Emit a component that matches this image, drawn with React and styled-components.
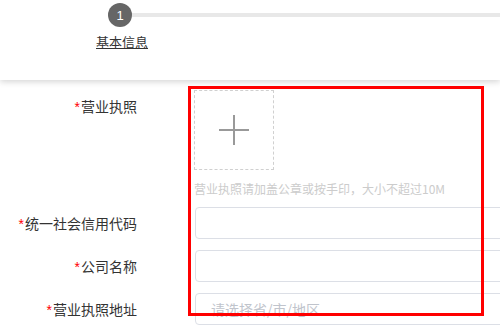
import React from 'react';
import styled, { createGlobalStyle } from 'styled-components';

const GlobalStyle = createGlobalStyle`
    html, body {
        margin: 0;
        padding: 0;
        background: #fff;
        width: 500px;
        height: 330px;
        overflow: hidden;
        font-family: "Noto Sans CJK SC", "Noto Sans", sans-serif;
    }
`;

const Page = styled.div`
    position: relative;
    width: 500px;
    height: 330px;
    overflow: hidden;
`;

const Header = styled.div`
    height: 80px;
    background: #fff;
    box-shadow: 0 2px 6px rgba(0, 0, 0, 0.16);
    padding: 3px 0 0 108px;
    box-sizing: border-box;
    position: relative;
    z-index: 1;
`;

const StepHead = styled.div`
    display: flex;
    align-items: center;
`;

const StepCircle = styled.div`
    width: 24px;
    height: 24px;
    border-radius: 50%;
    background: #666;
    color: #fff;
    font-family: "Liberation Sans", Arial, sans-serif;
    font-size: 13px;
    display: flex;
    align-items: center;
    justify-content: center;
    flex: none;
`;

const StepLine = styled.div`
    flex: 1;
    height: 4px;
    background: #e8e8e8;
`;

const StepTitle = styled.div`
    width: 28px;
    display: flex;
    justify-content: center;
    margin-top: 6px;
    white-space: nowrap;
    font-size: 13px;
    line-height: 18px;
    color: #333;
    text-decoration: underline;
`;

const Form = styled.div`
    padding-top: 10px;
`;

const Row = styled.div`
    display: flex;
    align-items: flex-start;
    margin-bottom: ${p => p.$gap || 10}px;
`;

const Label = styled.div`
    width: 137px;
    flex: none;
    text-align: right;
    font-size: 14px;
    line-height: 32px;
    color: #333;
`;

const Star = styled.span`
    color: #f00;
    font-family: "Liberation Sans", Arial, sans-serif;
    font-size: 14px;
    margin-right: 1px;
`;

const Content = styled.div`
    margin-left: ${p => p.$offset || 58}px;
    flex: none;
`;

const Upload = styled.div`
    width: 80px;
    height: 80px;
    box-sizing: border-box;
    border: 1px dashed #d0d0d0;
    display: flex;
    align-items: center;
    justify-content: center;
`;

const Hint = styled.div`
    margin-top: 9px;
    font-size: 12px;
    line-height: 20px;
    color: #ccc;
    white-space: nowrap;
`;

const Input = styled.div`
    width: 400px;
    height: 32px;
    box-sizing: border-box;
    border: 1px solid #dcdfe6;
    border-radius: 4px;
    padding-left: 15px;
    font-size: 14px;
    line-height: 30px;
    color: #c0c4cc;
`;

const Highlight = styled.div`
    position: absolute;
    left: 188px;
    top: 86px;
    width: 296px;
    height: 230px;
    box-sizing: border-box;
    border: 3px solid #f00;
    pointer-events: none;
    z-index: 2;
`;

const Plus = () => (
    <svg width="32" height="32" viewBox="0 0 32 32">
        <path d="M16 1v30M1 16h30" stroke="#999" strokeWidth="2" fill="none" />
    </svg>
);

export default function App() {
    return (
        <Page>
            <GlobalStyle />
            <Header>
                <StepHead>
                    <StepCircle>1</StepCircle>
                    <StepLine />
                </StepHead>
                <StepTitle>基本信息</StepTitle>
            </Header>
            <Form>
                <Row $gap={8}>
                    <Label><Star>*</Star>营业执照</Label>
                    <Content $offset={57}>
                        <Upload><Plus /></Upload>
                        <Hint>营业执照请加盖公章或按手印，大小不超过10M</Hint>
                    </Content>
                </Row>
                <Row>
                    <Label><Star>*</Star>统一社会信用代码</Label>
                    <Content><Input /></Content>
                </Row>
                <Row>
                    <Label><Star>*</Star>公司名称</Label>
                    <Content><Input /></Content>
                </Row>
                <Row>
                    <Label><Star>*</Star>营业执照地址</Label>
                    <Content><Input>请选择省/市/地区</Input></Content>
                </Row>
            </Form>
            <Highlight />
        </Page>
    );
}
